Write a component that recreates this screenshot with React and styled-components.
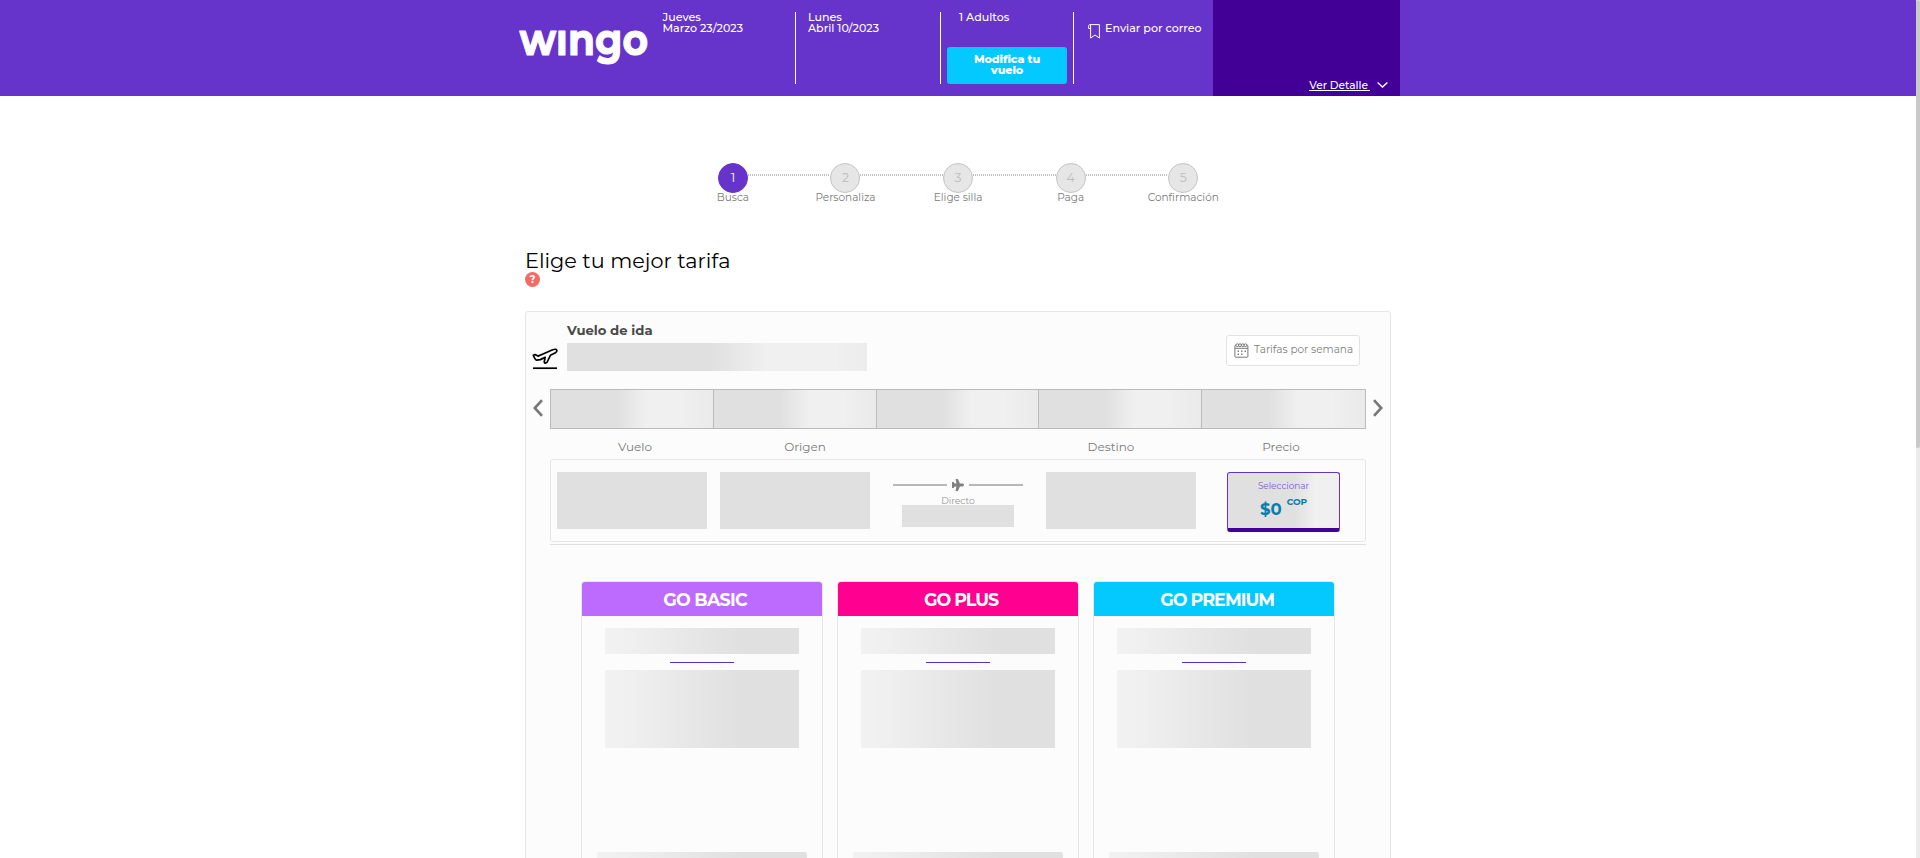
import React from "react";
import styled, { createGlobalStyle } from "styled-components";

const GlobalStyle = createGlobalStyle`
  *, *::before, *::after { box-sizing: border-box; }
  html, body { margin: 0; padding: 0; height: 858px; overflow: hidden; background: #fff; }
  body { font-family: Montserrat, Inter, "Liberation Sans", sans-serif; color: #7a7a7a; }
`;

const Page = styled.div`
  width: 1916px;
  height: 858px;
  overflow: hidden;
  display: flex;
  flex-direction: column;
`;

const Scrollbar = styled.div`
  position: fixed;
  top: 0;
  right: 0;
  width: 4px;
  height: 100vh;
  background: #ebebeb;
`;

const ScrollThumb = styled.div`
  height: 448px;
  border-radius: 2px;
  background: #c9c9c9;
`;

const Label = styled.span`
  font-size: ${(p) => p.$size || 11.1}px;
  line-height: ${(p) => p.$line || 11}px;
  font-weight: ${(p) => p.$weight || 400};
  letter-spacing: ${(p) => p.$spacing || 0}px;
  color: ${(p) => p.$color || "inherit"};
  white-space: nowrap;
`;

/* Header */
const Header = styled.header`
  flex: none;
  height: 96px;
  background: #6633cb;
  color: #fff;
  display: flex;
  justify-content: center;

  ${Label} { font-weight: 500; }
`;

const HeaderInner = styled.div`
  width: 884px;
  display: flex;
  align-items: stretch;
`;

const Logo = styled.svg`
  flex: none;
  width: 134px;
  height: 96px;
  overflow: visible;
`;

const InfoColumn = styled.div`
  width: ${(p) => p.$width}px;
  height: 72px;
  margin-top: 12px;
  padding-left: ${(p) => p.$indent}px;
  border-right: 1px solid #fff;
  display: flex;
  flex-direction: column;
  align-items: flex-start;
`;

const ModifyButton = styled.button`
  width: 120px;
  height: 37px;
  margin: auto 0 0 -12px;
  padding: 0 0 1px;
  border: 0;
  border-radius: 3px;
  background: #03c9ff;
  color: #fff;
  font: 800 11.2px/11px Montserrat, Inter, sans-serif;
  letter-spacing: -0.1px;
`;

const MailLink = styled.div`
  width: 139px;
  padding: 23px 0 0 14px;
  display: flex;
  align-items: flex-start;
  gap: 5px;

  svg { flex: none; margin-top: 1px; }
`;

const Detail = styled.div`
  width: 187px;
  background: #420097;
  display: flex;
  align-items: flex-end;
  justify-content: flex-end;
  padding: 0 12px 5px 0;
  gap: 7px;

  ${Label} { height: 11px; border-bottom: 1px solid #fff; padding-right: 2px; line-height: 12px; }
  svg { margin-bottom: 3px; }
`;

/* Progress steps */
const Steps = styled.ol`
  list-style: none;
  margin: 67px 0 0 676.6px;
  padding: 0;
  width: 563px;
  display: grid;
  grid-template-columns: repeat(5, 1fr);
`;

const Step = styled.li`
  display: flex;
  flex-direction: column;
  align-items: center;
  height: 42px;

  ${Label} { margin-top: -1px; }
`;

const StepTrack = styled.div`
  width: 100%;
  display: grid;
  grid-template-columns: minmax(0, 1fr) 30px minmax(0, 1fr);
`;

const Dots = styled.div`
  width: 82.6px;
  height: 2px;
  margin-top: 11px;
  background: repeating-linear-gradient(90deg, #c0c0c0 0 1px, #fff 1px 2px);
`;

const StepCircle = styled.div`
  grid-column: 2;
  height: 30px;
  border-radius: 50%;
  border: 1px solid ${(p) => (p.$active ? "#6633cb" : "#c4c4c4")};
  background: ${(p) => (p.$active ? "#6633cb" : "#e6e6e6")};
  color: ${(p) => (p.$active ? "#fff" : "#bdbdbd")};
  font-size: 12.5px;
  line-height: 28px;
  text-align: center;
`;

/* Content */
const Content = styled.main`
  width: 866px;
  margin: 45px auto 0;
`;

const Title = styled.h1`
  margin: 0;
  height: 22px;
  font-size: 20.8px;
  font-weight: 400;
  line-height: 22px;
  color: #000;
`;

const Help = styled.div`
  width: 15px;
  height: 15px;
  border-radius: 50%;
  background: #f26c66;
  color: #fff;
  font-size: 10px;
  font-weight: 700;
  line-height: 15px;
  text-align: center;
`;

const Panel = styled.section`
  height: 640px;
  margin-top: 24px;
  border: 1px solid #e6e6e6;
  border-radius: 3px;
  background: #fcfcfc;
  display: flex;
  flex-direction: column;
`;

const PanelHead = styled.div`
  height: 77px;
  display: flex;
`;

const FlightIcon = styled.svg`
  flex: none;
  width: 26px;
  height: 22px;
  margin: 36px 8px 0 6px;
`;

const FlightHeading = styled.div`
  display: flex;
  flex-direction: column;
  gap: 7px;
  padding: 12px 0 0 1px;
`;

const RoutePlaceholder = styled.div`
  width: 300px;
  height: 28px;
  background: linear-gradient(90deg, #e0e0e0 48%, #f0f0f0 67%, #f0f0f0 88%, #ececec);
`;

const WeekButton = styled.button`
  width: 134px;
  height: 31px;
  margin: 23px 30px 0 auto;
  padding: 0 0 2px 6.500px;
  border: 1px solid #e2e2e2;
  border-radius: 3px;
  background: #fff;
  color: #808080;
  font-family: inherit;
  display: flex;
  align-items: center;
  gap: 5.500px;

  svg { flex: none; margin-top: 1px; }
`;

const DateStrip = styled.div`
  height: 40px;
  display: flex;
  align-items: center;
  padding: 0 7px;
  gap: 7px;

  > svg { margin-bottom: 3px; }
`;

const DateCells = styled.div`
  width: 816px;
  height: 40px;
  border: 1px solid #bbb;
  display: grid;
  grid-template-columns: repeat(5, 1fr);
`;

const DateCell = styled.div`
  background: linear-gradient(90deg, #e0e0e0 41%, #f0f0f0 59%, #f0f0f0 78%, #eaeaea);
  border-right: 1px solid #bbb;
  &:last-child { border-right: 0; }
`;

const ColumnLabels = styled.div`
  height: 30px;
  padding-top: 12px;
  display: grid;
  margin: 0 24px;
  grid-template-columns: 170px 170px 136px 170px 170px;
  text-align: center;
`;

const FlightRow = styled.div`
  height: 83px;
  margin: 0 24px;
  padding: 12px 25px 0 6px;
  border: 1px solid #e6e6e6;
  border-radius: 3px;
  display: flex;
  align-items: flex-start;
`;

const Block = styled.div`
  width: 150px;
  height: 57px;
  background: #e0e0e0;
  margin-right: ${(p) => p.$after || 0}px;
`;

const Direct = styled.div`
  width: 130px;
  margin-right: 23px;
  padding-top: 7px;
  display: flex;
  flex-direction: column;
  align-items: center;
`;

const DirectTrack = styled.div`
  width: 100%;
  height: 12px;
  display: flex;
  align-items: center;
  justify-content: space-between;
`;

const DirectLine = styled.div`
  width: 54px;
  height: 2px;
  background: #b8b8b8;
`;

const DurationBlock = styled.div`
  width: 112px;
  height: 22px;
  margin-top: -5px;
  background: #e0e0e0;
`;

const PriceButton = styled.button`
  width: 113px;
  height: 60px;
  margin-left: auto;
  padding: 7px 0 0;
  border: 1px solid #6633cb;
  border-bottom: 4px solid #420097;
  border-radius: 3px;
  background: linear-gradient(90deg, #e0e0e0 60%, #f0f0f0 78%);
  font-family: inherit;
  display: flex;
  flex-direction: column;
  align-items: center;
  gap: 6px;
`;

const Price = styled.div`
  display: flex;
  align-items: flex-start;
  gap: 5px;
  color: #087fab;
`;

const Divider = styled.div`
  height: 1px;
  margin: 2px 24px 0;
  background: #dfdfe3;
`;

const Fares = styled.div`
  margin: 36px 0 0 55.3px;
  display: flex;
  gap: 14.3px;
`;

const FareCard = styled.article`
  flex: none;
  width: 241.7px;
  height: 330px;
  border: 1px solid #e6e6e6;
  border-radius: 4px;
  overflow: hidden;
  display: flex;
  flex-direction: column;
  align-items: center;
`;

const FareHeader = styled.div`
  width: 100%;
  height: 34px;
  flex: none;
  background: ${(p) => p.$color};
  padding: 2px 0 0 6px;
  display: flex;
  align-items: center;
  justify-content: center;
  color: #fff;
`;

const FareBlock = styled.div`
  flex: none;
  width: ${(p) => p.$width || 194}px;
  height: ${(p) => p.$height}px;
  margin-top: ${(p) => p.$gap}px;
  border-radius: ${(p) => p.$radius || 0}px;
  background: linear-gradient(90deg, #f2f2f2, #efefef 15%, #e0e0e0 70%);
`;

const FareRule = styled.div`
  flex: none;
  width: 64px;
  height: 1px;
  margin-top: 8px;
  background: #5a2fd6;
`;

const BookmarkIcon = () => (
  <svg width="12" height="15" viewBox="0 0 12 15" fill="none" stroke="#fff" strokeWidth="1">
    <path d="M2.600 4.500H.6V2.200C.6 1.200 1 .6 1.800.6h9.600v13.500L7 11l-4.400 3V2C2.600 1.100 2.300.6 1.800.6" />
  </svg>
);

const Chevron = () => (
  <svg width="11" height="6" viewBox="0 0 11 6" fill="none" stroke="#fff" strokeWidth="1.4">
    <path d="M.6.6 5.500 5 10.400.6" />
  </svg>
);

const Arrow = ({ flip }) => (
  <svg width="10" height="18" viewBox="0 0 10 18" fill="none" stroke="#777" strokeWidth="2.6">
    <path d={flip ? "M1 1.200 8.200 9 1 16.800" : "M9 1.200 1.800 9 9 16.800"} />
  </svg>
);

const CalendarIcon = () => (
  <svg width="15" height="15" viewBox="0 0 15 15" fill="none" stroke="#777" strokeWidth="1">
    <rect x=".9" y="2.2" width="13" height="12" rx=".8" />
    <path d="M1 5.300h13" />
    <g fill="#fff">
      <circle cx="3.3" cy="2.2" r="1.4" />
      <circle cx="6" cy="2.2" r="1.4" />
      <circle cx="8.8" cy="2.2" r="1.4" />
      <circle cx="11.5" cy="2.2" r="1.4" />
    </g>
    <path strokeWidth="1.4" strokeDasharray="1.4 2.1" d="M3.600 8.200h8.500M3.600 11.300h5.500" />
  </svg>
);

const PlaneIcon = () => (
  <svg width="12" height="12" viewBox="0 0 12 12" fill="#808080">
    <path d="M12 6c0 .8-.8 1.400-1.800 1.400H7.900L5.900 12H3.600l.8-4.400H2.600L1.600 9H0V3h1.600l1 1.400h1.800L3.600 0h2.300l2 4.600h2.300C11.200 4.600 12 5.200 12 6z" />
  </svg>
);

const steps = ["Busca", "Personaliza", "Elige silla", "Paga", "Confirmación"];
const fares = [
  { name: "GO BASIC", color: "#bd6bff", spacing: -0.75 },
  { name: "GO PLUS", color: "#ff0090", spacing: -1 },
  { name: "GO PREMIUM", color: "#03c9ff", spacing: -0.95 },
];

export default function App() {
  return (
    <>
      <GlobalStyle />
      <Page>
        <Header>
          <HeaderInner>
            <Logo viewBox="0 0 134 96" role="img" aria-label="wingo">
              <text
                x="3.5"
                y="54.5"
                textLength="128.5"
                lengthAdjust="spacingAndGlyphs"
                fontFamily="Montserrat, Inter, sans-serif"
                fontWeight="700"
                fontSize="43"
                fill="#fff"
                stroke="#fff"
                strokeWidth="1"
                strokeLinejoin="round"
              >
                wıngo
              </text>
            </Logo>
            <InfoColumn $width={146} $indent={12.5}>
              <Label>Jueves</Label>
              <Label>Marzo 23/2023</Label>
            </InfoColumn>
            <InfoColumn $width={145} $indent={12}>
              <Label>Lunes</Label>
              <Label>Abril 10/2023</Label>
            </InfoColumn>
            <InfoColumn $width={133} $indent={18}>
              <Label>1 Adultos</Label>
              <ModifyButton>
                Modifica tu
                <br />
                vuelo
              </ModifyButton>
            </InfoColumn>
            <MailLink>
              <BookmarkIcon />
              <Label>Enviar por correo</Label>
            </MailLink>
            <Detail>
              <Label $size={10.6}>Ver Detalle</Label>
              <Chevron />
            </Detail>
          </HeaderInner>
        </Header>

        <Steps>
          {steps.map((name, i) => (
            <Step key={name}>
              <StepTrack>
                <StepCircle $active={i === 0}>{i + 1}</StepCircle>
                {i < steps.length - 1 && <Dots />}
              </StepTrack>
              <Label $size={10.5}>{name}</Label>
            </Step>
          ))}
        </Steps>

        <Content>
          <Title>Elige tu mejor tarifa</Title>
          <Help>?</Help>

          <Panel>
            <PanelHead>
              <FlightIcon viewBox="0 0 26 22" fill="none" stroke="#000" strokeWidth="1.7" strokeLinejoin="round">
                <path d="M1.300 7.200 3 6.600l3 1.500 5-2.100L19.500 2.300c2-.9 4.800-1.300 5.300-.2.5 1-1 2.500-2.800 3.400l-3.600 1.800-3.500 7.200-1.900.7-.8-1.200 1-4.600-4.900 2.200-3.600.6C3.200 11.700 2.200 9.500 1.300 7.200z" />
                <path d="M1 20.200h24" />
              </FlightIcon>
              <FlightHeading>
                <Label $size={13.2} $line={12} $weight={700} $color="#4a4a4a">Vuelo de ida</Label>
                <RoutePlaceholder />
              </FlightHeading>
              <WeekButton>
                <CalendarIcon />
                <Label $size={10.5}>Tarifas por semana</Label>
              </WeekButton>
            </PanelHead>

            <DateStrip>
              <Arrow />
              <DateCells>
                {[0, 1, 2, 3, 4].map((n) => (
                  <DateCell key={n} />
                ))}
              </DateCells>
              <Arrow flip />
            </DateStrip>

            <ColumnLabels>
              <Label $size={12}>Vuelo</Label>
              <Label $size={12}>Origen</Label>
              <span />
              <Label $size={12}>Destino</Label>
              <Label $size={12}>Precio</Label>
            </ColumnLabels>

            <FlightRow>
              <Block $after={13} />
              <Block $after={23} />
              <Direct>
                <DirectTrack>
                  <DirectLine />
                  <PlaneIcon />
                  <DirectLine />
                </DirectTrack>
                <Label $size={9.2} $line={19} $color="#949494">Directo</Label>
                <DurationBlock />
              </Direct>
              <Block />
              <PriceButton>
                <Label $size={8.9} $line={12} $color="#7d5ccd">Seleccionar</Label>
                <Price>
                  <Label $size={16.5} $line={22} $weight={700}>$0</Label>
                  <Label $size={9} $line={8} $weight={700}>COP</Label>
                </Price>
              </PriceButton>
            </FlightRow>
            <Divider />

            <Fares>
              {fares.map((fare) => (
                <FareCard key={fare.name}>
                  <FareHeader $color={fare.color}>
                    <Label $size={17.5} $line={20} $weight={700} $spacing={fare.spacing}>{fare.name}</Label>
                  </FareHeader>
                  <FareBlock $height={26} $gap={12} />
                  <FareRule />
                  <FareBlock $height={78} $gap={7} />
                  <FareBlock $width={210} $height={40} $gap={104} $radius={3} />
                </FareCard>
              ))}
            </Fares>
          </Panel>
        </Content>
      </Page>
      <Scrollbar>
        <ScrollThumb />
      </Scrollbar>
    </>
  );
}
